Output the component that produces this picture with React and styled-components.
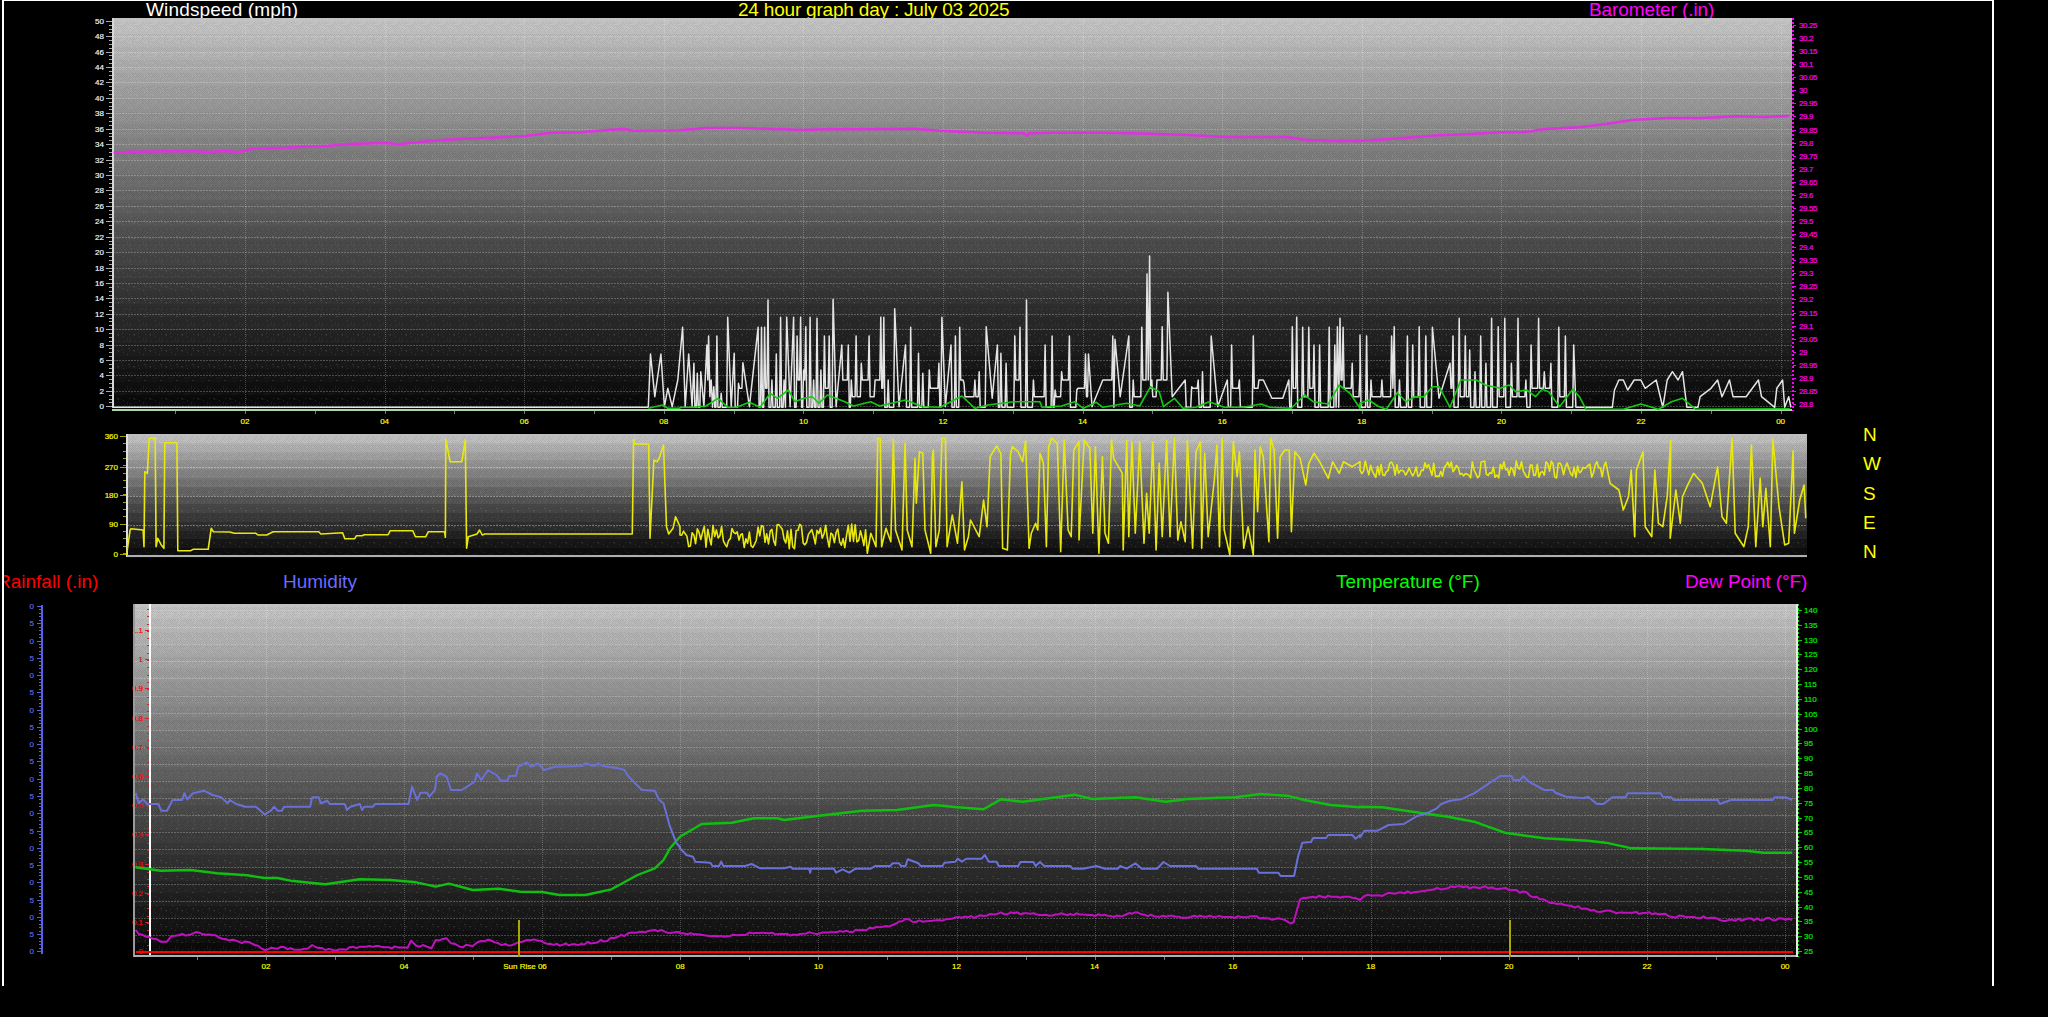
import React from 'react';
import styled, { createGlobalStyle } from 'styled-components';

const Global = createGlobalStyle`
  html, body { margin: 0; background: #000; height: 1017px; overflow: hidden; }
  #root { height: 1017px; }
`;

const Frame = styled.div`
  box-sizing: border-box;
  margin-left: 2px;
  width: 1992px;
  height: 986px;
  border-top: 1px solid #fff;
  border-left: 2px solid #fff;
  border-right: 2px solid #fff;
  overflow: hidden;
  display: flex;
  flex-direction: column;
  background: #000;
`;
const TitleRow = styled.div`
  display: grid;
  grid-template-columns: ${p => p.$cols};
  height: ${p => p.$h}px;
  flex: none;
  align-items: ${p => p.$align || 'start'};
  padding-left: ${p => p.$pad || 0}px;
  padding-bottom: ${p => p.$pb || 0}px;
  box-sizing: border-box;
`;
const Title = styled.span`
  font: 19px/17px "Liberation Sans", Arial, sans-serif;
  color: ${p => p.$c};
  white-space: nowrap;
  margin-left: ${p => p.$ml || 0}px;
  letter-spacing: ${p => p.$ls || 0}px;
`;
const Chart = styled.svg`
  display: block;
  flex: none;
  overflow: visible;
`;
const DirRow = styled.div`
  display: flex;
  height: 130px;
  flex: none;
`;
const Compass = styled.div`
  display: flex;
  flex-direction: column;
  margin: -10px 0 0 8px;
  width: 30px;
`;
const CompassLetter = styled.span`
  font: 19px/29.3px "Liberation Sans", Arial, sans-serif;
  color: #ffff00;
`;
const AxisText = styled.text`
  font: 8px "Liberation Sans", Arial, sans-serif;
  fill: ${p => p.$c};
  stroke: ${p => p.$c};
  stroke-width: 0.18px;
  text-anchor: ${p => p.$a || 'end'};
  letter-spacing: ${p => p.$ls || 0}px;
`;
const Trace = styled.polyline`
  fill: none;
  stroke: ${p => p.$c};
  stroke-width: ${p => p.$w || 2};
  stroke-linejoin: round;
`;
const Rule = styled.line`
  stroke: ${p => p.$c};
  stroke-width: ${p => p.$w || 1};
  stroke-dasharray: ${p => p.$dash || 'none'};
  shape-rendering: crispEdges;
`;

/* ---------- helpers ---------- */
function rng(seed) {
  let a = seed >>> 0;
  return () => {
    a = (a + 0x6d2b79f5) | 0;
    let t = Math.imul(a ^ (a >>> 15), 1 | a);
    t = (t + Math.imul(t ^ (t >>> 7), 61 | t)) ^ t;
    return ((t ^ (t >>> 14)) >>> 0) / 4294967296;
  };
}
const A = 0, B = 680, C = 1360;
const parse = s => s.trim().split(/\s+/).map(p => p.split(',').map(Number));
const conv = (off, yoff, arr) => arr.map(([a, b]) => [off + a / (off === C ? 2.279 : 2.306), yoff + b / 3]);
const series = (yoff, ...parts) => parts.flatMap(([off, s]) => conv(off, yoff, typeof s === 'string' ? parse(s) : s));
const pts = arr => arr.map(p => p[0].toFixed(1) + ',' + p[1].toFixed(1)).join(' ');
const range = (n, f) => Array.from({ length: n }, (_, i) => f(i));

function noise(z0, z1, step, base, amp, seed) {
  const r = rng(seed);
  const out = [];
  for (let x = z0; x < z1; x += step) out.push([x, base + (r() * 2 - 1) * amp]);
  return out;
}
/* resample a traced line every few pixels, with the sensor's small jitter */
function jitter(arr, step, amp, seed) {
  const r = rng(seed);
  const out = [];
  for (let i = 0; i < arr.length - 1; i++) {
    const [x0, y0] = arr[i], [x1, y1] = arr[i + 1];
    const n = Math.max(1, Math.floor((x1 - x0) / step));
    for (let k = 0; k < n; k++) {
      const t = k / n;
      out.push([x0 + (x1 - x0) * t, y0 + (y1 - y0) * t + Math.round((r() * 2 - 1) * amp)]);
    }
  }
  out.push(arr[arr.length - 1]);
  return out;
}

/* ---------- data traced from the graph ---------- */
const baro = series(0,
  [A, '262,459 300,455 400,454 450,453 480,456 520,453 550,457 580,447 620,444 660,443 700,440 760,437 800,432 890,429 920,433 960,427 1020,420 1060,417 1130,413 1210,408 1270,398 1340,397 1400,390 1440,387 1460,392 1568,391'],
  [B, '0,391 60,384 140,384 200,386 280,390 340,388 420,388 540,386 600,392 700,398 795,400 800,408 805,400 860,398 980,398 1040,400 1160,404 1260,411 1400,411 1440,419 1500,423 1568,423'],
  [C, '0,423 60,418 180,406 240,403 320,397 380,396 420,387 500,382 560,372 620,360 700,354 780,354 860,349 920,351 978,348']);

const gustPeaks = {
  a: '1500,1062 1510,1190 1524,1062 1532,1220 1540,1165 1550,1220 1563,1140',
  b: '6,982 12,1220 20,1062 28,1220 32,1090 40,1120 48,1115 55,1220 62,1035 66,1008 72,1140 78,1160 85,1008 95,1180 110,952 118,1220 125,1060 135,1150 145,1088 160,1220 180,982 188,982 195,982 203,900 212,1140 222,1062 232,952 240,1140 246,952 254,1220 262,952 270,1008 278,952 285,1110 290,980 300,952 308,1140 316,955 325,1110 333,1008 344,1008 353,898 360,1220 373,1035 388,1035 395,1140 406,1008 418,1090 436,1008 450,1140 463,952 470,952 480,1140 495,926 505,1220 520,1035 532,982 550,1060 560,1120 575,1110 597,1090 604,952 612,1220 625,1035 635,1008 645,982 655,1150 680,1140 690,1115 706,980 720,1195 732,1035 740,1060 752,1090 772,1008 784,982 799,900 815,1140 842,1035 858,1008 865,1170 880,1115 898,1008 915,1170 935,1062 942,1062 950,1220 975,1140 998,1008 1003,1018 1015,1190 1035,1008 1045,1140 1065,982 1077,822 1083,768 1088,1140 1100,1140 1112,980 1125,877 1135,1190 1165,1140 1180,1160 1195,1140 1205,1115 1225,1008 1240,1220 1262,1140 1272,1035 1290,1140 1322,1008 1335,1140 1345,1140 1365,1195 1390,1195 1404,1140 1412,980 1422,952 1436,982 1450,982 1462,1035 1475,1035 1497,982 1510,1035 1516,980 1522,955 1529,982 1550,1090 1568,1115',
  c: '0,1005 15,1008 25,1140 50,1140 72,1008 78,980 90,1140 108,1008 120,1035 135,980 150,1008 165,982 180,1195 205,1090 212,1008 226,955 240,1008 250,1050 262,1115 275,1008 287,1090 300,955 315,980 330,955 345,1090 360,955 378,1140 390,1035 407,955 420,1115 435,1090 453,982 468,1008 487,1035'
};
const tail = '492,1222 575,1222 580,1170 590,1140 600,1140 610,1170 625,1140 640,1140 650,1165 675,1140 690,1222 700,1140 712,1115 725,1140 735,1115 745,1222 770,1222 775,1190 800,1165 815,1140 825,1190 842,1140 850,1190 880,1190 908,1140 915,1190 945,1222 950,1165 963,1140 968,1222 977,1190 982,1222';
function spiky(off, s, seed) {
  const r = rng(seed);
  const p = conv(off, 0, parse(s));
  const troughs = [1222, 1222, 1222, 1222, 1190, 1165, 1140];
  const out = [];
  p.forEach((q, i) => {
    out.push(q);
    const n = p[i + 1];
    if (n && q[1] < 395 && n[1] < 395) {
      const ty = troughs[Math.floor(r() * troughs.length)] / 3;
      if (n[0] - q[0] > 3) out.push([q[0] + 1, ty], [n[0] - 1, ty]);
      else out.push([(q[0] + n[0]) / 2, ty]);
    }
  });
  return out;
}
const gust = [
  ...conv(A, 0, parse('262,1222 1495,1222')),
  ...spiky(A, gustPeaks.a, 3),
  ...spiky(B, gustPeaks.b, 7),
  ...spiky(C, gustPeaks.c, 11),
  ...conv(C, 0, parse(tail))
];
const avg = series(0,
  [A, '1495,1225 1528,1215 1540,1225 1568,1225'],
  [B, '0,1222 30,1222 60,1218 88,1195 110,1222 130,1222 160,1207 185,1222 208,1180 225,1195 250,1170 265,1205 285,1195 305,1190 320,1210 340,1185 380,1205 400,1218 440,1205 460,1218 520,1200 560,1220 600,1222 650,1188 680,1225 710,1215 770,1205 830,1205 835,1222 880,1218 910,1205 930,1225 960,1207 975,1222 1030,1210 1060,1218 1085,1160 1105,1175 1115,1220 1140,1195 1160,1225 1190,1222 1220,1205 1255,1222 1300,1222 1340,1212 1360,1222 1410,1225 1440,1185 1460,1205 1495,1212 1505,1190 1520,1155 1545,1180 1568,1225'],
  [C, '0,1210 20,1200 40,1218 60,1228 85,1178 105,1205 125,1190 145,1190 165,1160 180,1160 205,1222 230,1140 265,1140 285,1155 320,1165 340,1155 355,1175 380,1170 400,1190 415,1168 430,1175 455,1220 485,1168 500,1190 515,1228 600,1228 640,1212 680,1228 710,1205 735,1195 765,1228 980,1226']);

const dir = series(420,
  [A, '292,405 300,330 302,326 330,330 332,380 334,155 340,160 344,55 358,55 360,380 364,355 372,375 378,385 380,68 408,68 410,392 440,392 445,388 480,388 487,325 492,335 530,336 540,340 590,340 595,345 615,345 630,335 735,335 740,342 790,338 795,356 818,356 822,347 835,347 840,344 895,344 900,332 952,332 958,350 982,350 988,335 1025,335 1027,352 1028,58 1038,125 1065,125 1073,60 1076,385 1080,350 1100,342 1106,330 1112,345 1118,342 1458,342 1461,58 1464,72 1496,72 1499,355 1508,120 1515,125 1520,115 1530,75 1537,320 1542,342 1552,325 1558,290 1568,320'],
  [B, noise(0, 430, 4, 350, 38, 21)],
  [B, '432,400 440,340 452,380 456,55 462,55 465,380 475,325 486,365 492,58 497,330 512,390 519,70 524,330 535,380 542,115 545,250 552,95 560,100 565,330 578,400 582,110 584,90 590,380 598,330 604,55 612,55 616,380 628,285 640,370 650,185 656,390 665,350 670,300 690,350 700,240 708,320 715,110 730,78 740,100 744,385 755,390 762,105 766,80 780,95 790,125 797,62 805,385 810,340 820,310 825,330 830,100 838,130 845,380 850,80 857,55 870,70 878,395 886,60 895,330 902,350 908,90 920,65 920,360 932,60 945,85 952,340 958,80 966,400 974,110 980,340 988,370 995,60 1000,115 1020,160 1022,390 1030,60 1035,350 1042,65 1050,340 1060,65 1070,370 1076,220 1082,340 1090,65 1098,390 1105,130 1112,350 1122,60 1130,350 1140,55 1148,360 1155,305 1165,365 1170,60 1182,385 1190,95 1200,65 1203,385 1210,100 1218,350 1232,180 1238,75 1244,380 1250,55 1255,330 1268,405 1276,65 1285,170 1290,95 1300,385 1310,320 1322,405 1326,90 1332,275 1338,80 1345,110 1358,365 1362,55 1370,90 1378,355 1384,110 1395,90 1405,90 1410,335 1418,95 1430,115 1443,195 1450,130 1462,100 1475,125 1495,175 1505,125 1520,160 1530,125 1550,140 1568,125'],
  [C, noise(0, 565, 4, 148, 26, 33)],
  [C, '570,190 590,210 600,270 612,230 618,150 626,350 630,150 645,95 650,320 665,350 672,150 680,310 690,320 700,230 708,60 707,355 720,210 730,310 735,230 745,200 760,160 780,190 798,260 815,140 825,290 835,310 848,55 855,340 875,380 885,320 892,75 902,380 912,175 918,320 925,205 935,380 941,58 955,260 968,375 977,370 987,92 990,340 1002,240 1012,195 1016,295']);

const humidity = series(600,
  [A, '313,580 320,610 330,598 340,612 365,612 372,632 385,632 398,600 420,600 425,580 432,598 445,580 470,572 490,585 510,592 525,610 530,600 545,612 565,620 590,620 610,643 625,632 632,620 640,632 650,632 655,620 715,620 720,592 735,592 740,610 755,602 760,612 795,612 800,630 808,620 830,612 835,630 840,620 860,620 865,612 942,612 950,560 962,600 970,578 985,578 990,590 1003,570 1007,530 1015,520 1030,530 1040,570 1065,570 1095,545 1100,520 1110,540 1125,510 1145,525 1155,542 1170,542 1175,528 1190,528 1195,500 1215,487 1225,500 1240,490 1255,510 1280,500 1340,498 1350,490 1370,498 1380,490 1390,498 1425,505 1440,510 1450,530 1480,570 1510,572 1520,600 1530,610 1545,680 1560,730 1568,740'],
  [B, '0,745 15,765 30,770 35,785 70,788 75,798 90,798 95,785 100,798 150,798 165,792 185,805 240,805 255,800 260,806 298,806 300,818 302,806 355,806 360,818 375,808 390,818 405,806 440,806 450,798 485,798 490,790 505,790 510,798 520,798 525,778 550,790 555,798 605,798 610,788 635,785 640,776 650,785 660,776 695,776 703,765 712,785 730,785 735,798 780,798 785,786 815,786 820,798 830,786 840,798 900,798 905,806 930,806 960,798 980,806 1010,806 1015,798 1030,806 1050,790 1065,806 1100,806 1115,786 1130,798 1190,798 1195,806 1330,806 1335,818 1380,818 1385,828 1416,828 1425,770 1435,728 1455,726 1460,714 1490,714 1495,705 1550,705 1558,716 1568,705'],
  [C, '0,712 10,692 40,692 65,675 100,672 115,660 130,648 155,638 175,625 185,612 205,602 230,598 260,580 300,545 320,528 345,528 350,540 365,540 372,528 385,545 420,570 440,570 445,578 470,590 510,595 520,590 540,612 555,612 575,592 605,592 610,580 685,580 690,590 710,592 715,600 815,600 820,612 845,600 940,600 945,592 970,592 985,600']);
const temp = series(600,
  [A, '313,802 370,812 440,810 500,820 570,826 610,834 640,834 670,842 750,853 790,845 830,838 900,840 960,847 1005,860 1035,851 1090,870 1150,866 1200,875 1250,876 1290,885 1350,885 1410,868 1470,825 1510,805 1530,780 1545,745 1568,710'],
  [B, '0,710 50,672 120,668 170,655 225,655 240,660 320,647 420,632 500,630 585,615 640,622 700,628 740,598 790,605 850,595 910,584 950,597 1050,592 1120,605 1170,597 1280,592 1340,582 1400,587 1440,600 1500,615 1568,622'],
  [C, '0,620 50,622 120,635 200,650 260,665 330,698 420,715 520,722 560,728 620,745 780,747 880,752 920,758 985,758']);
const dew = jitter(series(600,
  [A, '313,990 320,1005 345,1012 370,1025 385,1025 395,1008 420,1005 460,998 490,1005 520,1020 550,1025 580,1030 610,1050 640,1043 700,1047 720,1038 750,1050 790,1048 830,1040 940,1043 948,1025 960,1040 975,1035 995,1045 1005,1020 1030,1015 1040,1030 1060,1040 1090,1035 1100,1028 1125,1022 1165,1035 1195,1030 1215,1020 1240,1022 1270,1035 1340,1032 1400,1020 1440,1005 1465,998 1510,990 1568,1000'],
  [B, '0,1003 40,1003 80,1010 130,1003 190,998 240,1005 320,998 390,995 445,985 490,975 520,960 560,965 635,955 700,948 740,940 800,940 830,945 900,942 1000,948 1050,940 1100,950 1200,950 1330,952 1380,958 1415,970 1430,898 1460,890 1550,890 1568,900'],
  [C, '0,900 10,888 50,885 80,878 130,876 160,870 200,862 300,862 340,868 380,880 410,898 450,912 490,920 540,932 600,938 680,940 720,950 790,952 820,960 940,957 985,960']), 3, 1, 57);

/* ---------- plot background: banded, dithered gradient ---------- */
const ramp = [[0, 198], [0.25, 146], [0.41, 112], [0.57, 76], [0.75, 45], [0.88, 24], [1, 8]];
function shade(t) {
  for (let i = 1; i < ramp.length; i++) {
    if (t <= ramp[i][0]) {
      const [a, va] = ramp[i - 1], [b, vb] = ramp[i];
      return Math.round(va + ((t - a) / (b - a)) * (vb - va));
    }
  }
  return 8;
}
function Dither({ id }) {
  const r = rng(99);
  const dots = [];
  for (let y = 0; y < 16; y++) for (let x = 0; x < 16; x++) {
    if ((x + y) % 2 === 0 && r() < 0.8) dots.push(<rect key={x + '-' + y} x={x} y={y} width="1" height="1" fill="#000" fillOpacity="0.08" />);
    else if (r() < 0.08) dots.push(<rect key={x + '-' + y} x={x} y={y} width="1" height="1" fill="#c8c878" fillOpacity="0.14" />);
  }
  return <pattern id={id} width="16" height="16" patternUnits="userSpaceOnUse" shapeRendering="crispEdges">{dots}</pattern>;
}
function Plot({ id, x, y, w, h, bands }) {
  const bh = h / bands;
  return (
    <g shapeRendering="crispEdges">
      <defs><Dither id={id} /></defs>
      {range(bands, i => (
        <g key={i}>
          <rect x={x} y={y + i * bh} width={w} height={bh + 0.5} fill={`rgb(${Array(3).fill(shade((i + 0.5) / bands)).join(',')})`} />
          <rect x={x} y={y + i * bh + bh * 0.2} width={w} height={bh * 0.8} fill={`url(#${id})`} />
        </g>
      ))}
    </g>
  );
}
const GRID = 'rgba(255,255,255,0.24)';

/* ---------- wind / barometer ---------- */
const hourX1 = h => 245 + (h - 2) * 69.8;
const windY = v => 406.3 - v * 7.71;
const hourLabel = h => String(h % 24).padStart(2, '0');
const baroLabels = range(30, i => String(+(30.25 - i * 0.05).toFixed(2)));

function WindChart() {
  return (
    <Chart width="1988" height="412" viewBox="4 18 1988 412">
      <Plot id="d1" x={112} y={18} w={1680} h={390} bands={30} />
      {range(25, i => <Rule key={i} x1="113" x2="1792" y1={Math.round(windY(i * 2))} y2={Math.round(windY(i * 2))} $c={GRID} $dash="2 1" />)}
      {range(12, i => <Rule key={i} x1={Math.round(hourX1(2 + i * 2))} x2={Math.round(hourX1(2 + i * 2))} y1="18" y2="412" $c={GRID} $dash="1 1" />)}
      {range(100, i => <Rule key={i} x1="109" x2="112" y1={Math.round(windY(i / 2))} y2={Math.round(windY(i / 2))} $c="#aaa" />)}
      {range(26, i => (
        <g key={i}>
          <Rule x1="106" x2="112" y1={Math.round(windY(i * 2))} y2={Math.round(windY(i * 2))} $c="#aaa" />
          <AxisText x="104" y={windY(i * 2) + 3} $c="#f0f4ff">{i * 2}</AxisText>
        </g>
      ))}
      <Rule x1="112.5" x2="112.5" y1="18" y2="408" $c="#d8d8d8" $w="2" />
      <Rule x1="112" x2="1792" y1="410" y2="410" $c="#a8d8a8" $w="2" />
      {range(24, i => <Rule key={i} x1={Math.round(hourX1(i + 1))} x2={Math.round(hourX1(i + 1))} y1="411" y2="414" $c="#777" />)}
      <Trace points={pts(baro)} $c="#e030e0" $w="2.5" />
      <Trace points={pts(gust)} $c="#e4e4e4" $w="1.5" />
      <Trace points={pts(avg)} $c="#14c814" $w="1.6" />
      <Rule x1="1793" x2="1793" y1="18" y2="411" $c="#ff00ff" $w="2" $dash="2 2" />
      {baroLabels.map((t, i) => (
        <g key={t}>
          <Rule x1="1793" x2="1796" y1={Math.round(25 + i * 13.07)} y2={Math.round(25 + i * 13.07)} $c="#ff00ff" />
          <AxisText x="1799" y={28 + i * 13.07} $c="#ff00ff" $a="start" $ls="-0.4">{t}</AxisText>
        </g>
      ))}
      {range(12, i => <AxisText key={i} x={hourX1(2 + i * 2)} y="424" $c="#ffff00" $a="middle">{hourLabel(2 + i * 2)}</AxisText>)}
    </Chart>
  );
}

/* ---------- wind direction ---------- */
const dirTicks = [[360, 436], [270, 466.7], [180, 495], [90, 524], [0, 554]];
function DirectionChart() {
  return (
    <Chart width="1851" height="130" viewBox="4 430 1851 130">
      <Plot id="d2" x={126} y={434} w={1681} h={123} bands={14} />
      {[467, 496, 525].map(y => <Rule key={y} x1="127" x2="1807" y1={y} y2={y} $c="rgba(255,255,255,0.34)" $dash="2 1" />)}
      {range(17, i => <Rule key={i} x1="123" x2="126" y1={Math.round(436 + i * 7.3)} y2={Math.round(436 + i * 7.3)} $c="#a0a000" />)}
      {dirTicks.map(([v, y]) => (
        <g key={v}>
          <Rule x1="120" x2="126" y1={Math.round(y)} y2={Math.round(y)} $c="#a0a000" />
          <AxisText x="118" y={y + 3} $c="#ffff00">{v}</AxisText>
        </g>
      ))}
      <Rule x1="126.5" x2="126.5" y1="434" y2="557" $c="#e0e0e0" $w="2" />
      <Rule x1="127" x2="1807" y1="556" y2="556" $c="#b0b0b0" $w="2" />
      <Trace points={pts(dir)} $c="#e8e810" $w="1.6" />
    </Chart>
  );
}

/* ---------- temperature / humidity ---------- */
const hourX3 = h => 266 + (h - 2) * 69.05;
const rainLabels = ['1.1', '1', '0.9', '0.8', '0.7', '0.6', '0.5', '0.4', '0.3', '0.2', '0.1', '0'];
const tempLabels = range(24, i => 140 - i * 5);

function ClimateChart() {
  return (
    <Chart width="1988" height="381" viewBox="4 604 1988 381">
      {range(21, i => (
        <g key={i}>
          <Rule x1="37" x2="41" y1={Math.round(606 + i * 17.27)} y2={Math.round(606 + i * 17.27)} $c="#5a60e0" />
          <AxisText x="34" y={609 + i * 17.27} $c="#6068e0">{i % 2 ? '5' : '0'}</AxisText>
        </g>
      ))}
      {range(101, i => <Rule key={i} x1="39" x2="41" y1={Math.round(606 + i * 3.454)} y2={Math.round(606 + i * 3.454)} $c="#5a60e0" />)}
      <Rule x1="42" x2="42" y1="605" y2="954" $c="#5a60e0" $w="2" />

      <Plot id="d3" x={134} y={604} w={1663} h={352} bands={28} />
      {range(20, i => <Rule key={i} x1="135" x2="1796" y1={Math.round(952 - (i + 1) * 17.1)} y2={Math.round(952 - (i + 1) * 17.1)} $c={GRID} $dash="2 1" />)}
      {range(12, i => <Rule key={i} x1={Math.round(hourX3(2 + i * 2))} x2={Math.round(hourX3(2 + i * 2))} y1="604" y2="958" $c={GRID} $dash="1 1" />)}

      {range(48, i => <Rule key={i} x1="147" x2="149" y1={Math.round(952 - i * 7.3)} y2={Math.round(952 - i * 7.3)} $c="#e02020" />)}
      {rainLabels.map((t, i) => (
        <g key={t}>
          <Rule x1="145" x2="149" y1={Math.round(630 + i * 29.2)} y2={Math.round(630 + i * 29.2)} $c="#e02020" />
          <AxisText x="143" y={633 + i * 29.2} $c="#ff0000">{t}</AxisText>
        </g>
      ))}
      <Rule x1="150" x2="150" y1="604" y2="956" $c="#ffffff" $w="2" />
      <Rule x1="134" x2="134" y1="604" y2="957" $c="#9a9a9a" $w="2" />
      <Rule x1="134" x2="1797" y1="956" y2="956" $c="#b0b0b0" $w="2" />
      {range(24, i => <Rule key={i} x1={Math.round(hourX3(i + 1))} x2={Math.round(hourX3(i + 1))} y1="957" y2="960" $c="#777" />)}

      <Trace points={pts(dew)} $c="#c010c0" $w="2" />
      <Trace points={pts(temp)} $c="#10c010" $w="2.4" />
      <Trace points={pts(humidity)} $c="#6a70d8" $w="2" />
      <Rule x1="136" x2="1793" y1="952" y2="952" $c="#ff0000" $w="2" />
      <Rule x1="519" x2="519" y1="920" y2="957" $c="#a8a800" $w="1.5" />
      <Rule x1="1510" x2="1510" y1="920" y2="957" $c="#a8a800" $w="1.5" />

      <Rule x1="1797" x2="1797" y1="604" y2="957" $c="#e8e8e8" $w="1.5" />
      <Rule x1="1798.5" x2="1798.5" y1="604" y2="957" $c="#00e000" $dash="2 2" />
      {tempLabels.map((t, i) => (
        <g key={t}>
          <Rule x1="1798" x2="1802" y1={Math.round(610 + i * 14.83)} y2={Math.round(610 + i * 14.83)} $c="#00d000" />
          <AxisText x="1804" y={613 + i * 14.83} $c="#00f000" $a="start">{t}</AxisText>
        </g>
      ))}
      {range(12, i => {
        const h = 2 + i * 2;
        return h === 6
          ? <AxisText key={h} x="525" y="969" $c="#ffff00" $a="middle">Sun Rise 06</AxisText>
          : <AxisText key={h} x={hourX3(h)} y="969" $c="#ffff00" $a="middle">{hourLabel(h)}</AxisText>;
      })}
    </Chart>
  );
}

export default function App() {
  return (
    <>
      <Global />
      <Frame>
        <TitleRow $h={17} $pad={142} $cols="592px 851px auto">
          <Title $c="#ffffff" $ls={0.15}>Windspeed (mph)</Title>
          <Title $c="#ffff00" $ls={-0.2}>24 hour graph day : July 03 2025</Title>
          <Title $c="#ff00ff" $ls={-0.1}>Barometer (.in)</Title>
        </TitleRow>
        <WindChart />
        <DirRow>
          <DirectionChart />
          <Compass>
            {['N', 'W', 'S', 'E', 'N'].map((l, i) => <CompassLetter key={i}>{l}</CompassLetter>)}
          </Compass>
        </DirRow>
        <TitleRow $h={44} $pb={2} $cols="279px 1053px 349px auto" $align="center">
          <Title $c="#ff0000" $ml={-7}>Rainfall (.in)</Title>
          <Title $c="#6a6aff">Humidity</Title>
          <Title $c="#00ff00">Temperature (°F)</Title>
          <Title $c="#ff00ff" $ls={-0.1}>Dew Point (°F)</Title>
        </TitleRow>
        <ClimateChart />
      </Frame>
    </>
  );
}
